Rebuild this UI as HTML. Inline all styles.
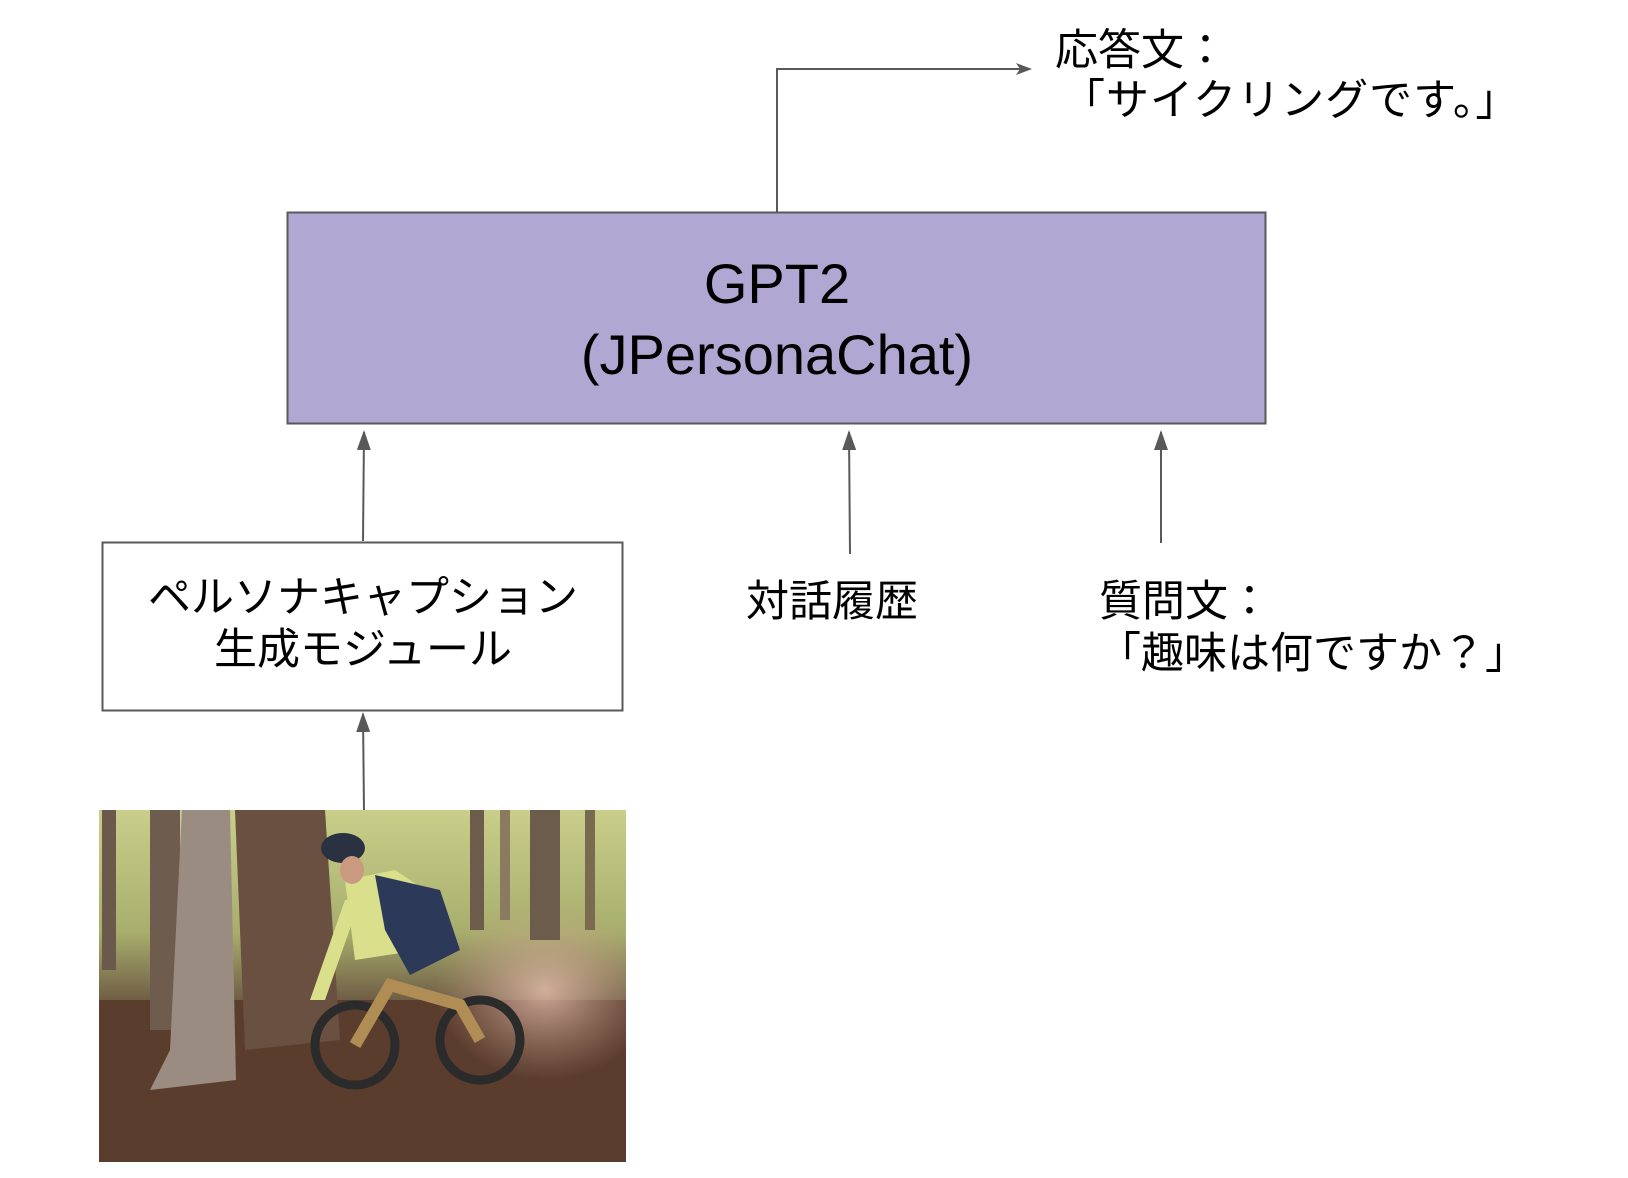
<!DOCTYPE html>
<html><head><meta charset="utf-8"><style>
html,body{margin:0;padding:0;background:#fff;width:1628px;height:1178px;overflow:hidden;position:relative;font-family:"Liberation Sans","Noto Sans CJK JP",sans-serif;color:#000}
.t{position:absolute;white-space:nowrap;line-height:1}
.j{font-size:43px}
</style></head><body>
<svg width="1628" height="1178" style="position:absolute;left:0;top:0">
<defs><marker id="a" markerWidth="16" markerHeight="12" refX="14" refY="6" orient="auto" markerUnits="userSpaceOnUse"><path d="M0,0 L16,6 L0,12 L4,6 z" fill="#595959"/></marker>
<marker id="b" markerWidth="20" markerHeight="14" refX="18" refY="7" orient="auto" markerUnits="userSpaceOnUse"><path d="M0,0 L20,7 L0,14 z" fill="#595959"/></marker></defs>
<rect x="287.5" y="212.5" width="978" height="211" fill="#b1a7d3" stroke="#595959" stroke-width="2"/>
<rect x="102.5" y="542.5" width="520" height="168" fill="#fff" stroke="#595959" stroke-width="2"/>
<path d="M777,212 V69 H1030" fill="none" stroke="#595959" stroke-width="2" marker-end="url(#a)"/>
<path d="M363,541 L364,432" stroke="#595959" stroke-width="2" marker-end="url(#b)"/>
<path d="M850,554 L849,432" stroke="#595959" stroke-width="2" marker-end="url(#b)"/>
<path d="M1161,543 L1161,432" stroke="#595959" stroke-width="2" marker-end="url(#b)"/>
<path d="M364,812 L363,714" stroke="#595959" stroke-width="2" marker-end="url(#b)"/>
<defs>
<linearGradient id="bg" x1="0" y1="0" x2="0" y2="1"><stop offset="0" stop-color="#c9cf8a"/><stop offset="0.35" stop-color="#a7ad6c"/><stop offset="0.55" stop-color="#6d5a44"/><stop offset="1" stop-color="#4a3428"/></linearGradient>
<radialGradient id="dust" cx="0.5" cy="0.5" r="0.5"><stop offset="0" stop-color="#d9b5a3" stop-opacity="0.9"/><stop offset="1" stop-color="#c49a86" stop-opacity="0"/></radialGradient>
<clipPath id="pc"><rect x="99" y="810" width="527" height="352"/></clipPath>
</defs>
<g clip-path="url(#pc)">
<rect x="99" y="810" width="527" height="352" fill="url(#bg)"/>
<rect x="99" y="1000" width="527" height="170" fill="#5b3d2e"/>
<ellipse cx="545" cy="990" rx="110" ry="90" fill="url(#dust)"/>
<rect x="102" y="810" width="14" height="160" fill="#6b5a4c"/>
<rect x="150" y="810" width="30" height="220" fill="#6e5c4f"/>
<path d="M182,810 H230 L236,1080 L150,1090 L170,1050 z" fill="#9a8c80"/>
<path d="M235,810 H325 L340,1040 L245,1050 z" fill="#6a5040"/>
<rect x="470" y="810" width="14" height="120" fill="#6b5c4c"/>
<rect x="530" y="810" width="30" height="130" fill="#6b5c4c"/>
<rect x="500" y="810" width="10" height="110" fill="#8a7a60"/>
<rect x="585" y="810" width="10" height="120" fill="#7a6a50"/>
<circle cx="355" cy="1045" r="40" fill="none" stroke="#2b2b2b" stroke-width="9"/>
<circle cx="480" cy="1040" r="40" fill="none" stroke="#2b2b2b" stroke-width="9"/>
<path d="M355,1045 L390,985 L460,1005 L480,1040" fill="none" stroke="#b08d55" stroke-width="12"/>
<path d="M345,880 L395,870 L440,900 L420,950 L355,960 z" fill="#d9df8a"/>
<path d="M375,875 L440,890 L460,950 L410,975 L385,930 z" fill="#2d3958"/>
<path d="M310,1000 L345,900 L360,900 L325,1000 z" fill="#d9df8a"/>
<ellipse cx="343" cy="848" rx="22" ry="15" fill="#2a3140"/>
<ellipse cx="352" cy="870" rx="12" ry="14" fill="#c99a80"/>
</g>
</svg>
<div class="t" style="left:287px;width:980px;text-align:center;top:256px;font-size:56px">GPT2</div>
<div class="t" style="left:287px;width:980px;text-align:center;top:327px;font-size:56px">(JPersonaChat)</div>
<div class="t j" style="left:1055px;top:30px">応答文：</div>
<div class="t j" style="left:1062px;top:80px;letter-spacing:1px">「サイクリングです。」</div>
<div class="t j" style="left:102px;width:522px;text-align:center;top:577px">ペルソナキャプション</div>
<div class="t j" style="left:102px;width:522px;text-align:center;top:629px">生成モジュール</div>
<div class="t j" style="left:746px;top:581px">対話履歴</div>
<div class="t j" style="left:1099px;top:581px">質問文：</div>
<div class="t j" style="left:1098px;top:633px">「趣味は何ですか？」</div>
</body></html>
